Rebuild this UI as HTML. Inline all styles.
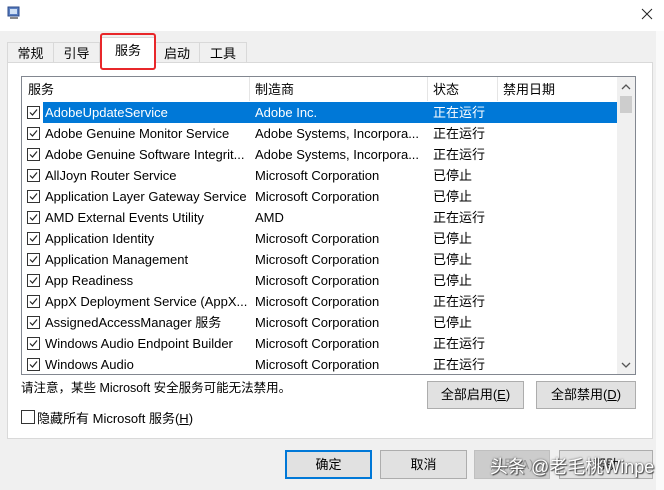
<!DOCTYPE html><html><head><style>
body{margin:0;width:664px;height:490px;background:#f0f0f0;font-family:"Liberation Sans","Noto Sans CJK SC",sans-serif;font-size:13px;color:#000;position:relative;overflow:hidden}
.a{position:absolute}
.tab{position:absolute;top:42px;height:20px;border:1px solid #d9d9d9;border-bottom:none;background:#f0f0f0;text-align:center;line-height:21px;font-size:13px}
.row{position:absolute;left:22px;width:595px;height:21px;line-height:21px;white-space:nowrap}
.cb{position:absolute;left:5px;top:4px;width:11px;height:11px;border:1px solid #333;background:#fff}
.cb svg{position:absolute;left:1px;top:1px}
.c1{position:absolute;left:23px}.c2{position:absolute;left:233px}.c3{position:absolute;left:411px}
.sel{background:#0078d7;color:#fff}
.btn{position:absolute;background:#e1e1e1;border:1px solid #adadad;text-align:center;font-size:13px}
</style></head><body>
<div class="a" style="left:0;top:0;width:664px;height:31px;background:#fff"></div>
<svg class="a" style="left:7px;top:6px" width="14" height="14"><rect x="1" y="1" width="11" height="9" fill="#5a7ec0" stroke="#2b4a8a"/><rect x="3" y="3" width="7" height="5" fill="#cfe0f5"/><rect x="3" y="11" width="8" height="2" fill="#888"/></svg>
<svg class="a" style="left:641px;top:8px" width="12" height="12"><path d="M1 1L11 11M11 1L1 11" stroke="#222" stroke-width="1"/></svg>
<div class="a" style="left:656px;top:31px;width:8px;height:459px;background:#fafafa"></div>
<div class="tab" style="left:7px;width:45px">常规</div>
<div class="tab" style="left:53px;width:45px">引导</div>
<div class="tab" style="left:154px;width:44px">启动</div>
<div class="tab" style="left:199px;width:46px">工具</div>
<div class="a" style="left:7px;top:62px;width:644px;height:375px;background:#fff;border:1px solid #d9d9d9"></div>
<div class="a" style="left:100px;top:37px;width:54px;height:27px;background:#fff;border:1px solid #d9d9d9;border-bottom:none;line-height:26px;text-align:center;font-size:13px">服务</div>
<div class="a" style="left:100px;top:33px;width:52px;height:33px;border:2px solid #e8272a;border-radius:3px"></div>
<div class="a" style="left:21px;top:76px;width:613px;height:297px;border:1px solid #828790;background:#fff;overflow:hidden">
<div class="a" style="left:0;top:0;width:595px;height:24px;line-height:25px">
<span class="a" style="left:6px">服务</span><span class="a" style="left:233px">制造商</span><span class="a" style="left:411px">状态</span><span class="a" style="left:481px">禁用日期</span>
<div class="a" style="left:227px;top:0;width:1px;height:24px;background:#e5e5e5"></div>
<div class="a" style="left:405px;top:0;width:1px;height:24px;background:#e5e5e5"></div>
<div class="a" style="left:475px;top:0;width:1px;height:24px;background:#e5e5e5"></div>
</div>
<div class="a" style="left:595px;top:0;width:18px;height:297px;background:#f0f0f0"></div>
<div class="a" style="left:598px;top:19px;width:12px;height:17px;background:#cdcdcd"></div>
<svg class="a" style="left:599px;top:6px" width="10" height="8"><path d="M1 6L5 2L9 6" stroke="#555" fill="none" stroke-width="1.3"/></svg>
<svg class="a" style="left:599px;top:284px" width="10" height="8"><path d="M1 2L5 6L9 2" stroke="#555" fill="none" stroke-width="1.3"/></svg>
</div>
<div id="rows"></div>
<script>
var d=[["AdobeUpdateService","Adobe Inc.","正在运行"],["Adobe Genuine Monitor Service","Adobe Systems, Incorpora...","正在运行"],["Adobe Genuine Software Integrit...","Adobe Systems, Incorpora...","正在运行"],["AllJoyn Router Service","Microsoft Corporation","已停止"],["Application Layer Gateway Service","Microsoft Corporation","已停止"],["AMD External Events Utility","AMD","正在运行"],["Application Identity","Microsoft Corporation","已停止"],["Application Management","Microsoft Corporation","已停止"],["App Readiness","Microsoft Corporation","已停止"],["AppX Deployment Service (AppX...","Microsoft Corporation","正在运行"],["AssignedAccessManager 服务","Microsoft Corporation","已停止"],["Windows Audio Endpoint Builder","Microsoft Corporation","正在运行"],["Windows Audio","Microsoft Corporation","正在运行"]];
var h="";d.forEach(function(r,i){var t=102+i*21;h+='<div class="row" style="top:'+t+'px;'+(t+21>374?'height:'+(374-t)+'px;overflow:hidden;':'')+'">'+(i==0?'<div class="a sel" style="left:21px;top:0;width:574px;height:21px"></div>':'')+'<div class="cb"><svg width="9" height="9"><path d="M1 4.5L3.5 7L8 1.5" stroke="#222" fill="none" stroke-width="1.2"/></svg></div><span class="c1 '+(i==0?'sel':'')+'">'+r[0]+'</span><span class="c2 '+(i==0?'sel':'')+'">'+r[1]+'</span><span class="c3 '+(i==0?'sel':'')+'">'+r[2]+'</span></div>'});document.getElementById('rows').innerHTML=h;
</script>
<div class="a" style="left:21px;top:377px;font-size:12.5px">请注意，某些 Microsoft 安全服务可能无法禁用。</div>
<div class="btn" style="left:427px;top:381px;width:95px;height:26px;line-height:26px">全部启用(<u>E</u>)</div>
<div class="btn" style="left:536px;top:381px;width:98px;height:26px;line-height:26px">全部禁用(<u>D</u>)</div>
<div class="a" style="left:21px;top:410px;width:12px;height:12px;border:1px solid #333;background:#fff"></div>
<div class="a" style="left:37px;top:408px">隐藏所有 Microsoft 服务(<u>H</u>)</div>
<div class="btn" style="left:285px;top:450px;width:83px;height:25px;line-height:25px;border:2px solid #0078d7">确定</div>
<div class="btn" style="left:380px;top:450px;width:85px;height:27px;line-height:27px">取消</div>
<div class="btn" style="left:474px;top:450px;width:74px;height:27px;line-height:27px;background:#cccccc;border-color:#bfbfbf;color:#999">应用(A)</div>
<div class="btn" style="left:559px;top:450px;width:92px;height:27px;line-height:27px">帮助</div>
<div class="a" style="left:490px;top:453px;font-size:18px;color:#fff;text-shadow:0 0 2px #555,1px 1px 1px #444;white-space:nowrap">头条 @老毛桃Winpe</div>
</body></html>
